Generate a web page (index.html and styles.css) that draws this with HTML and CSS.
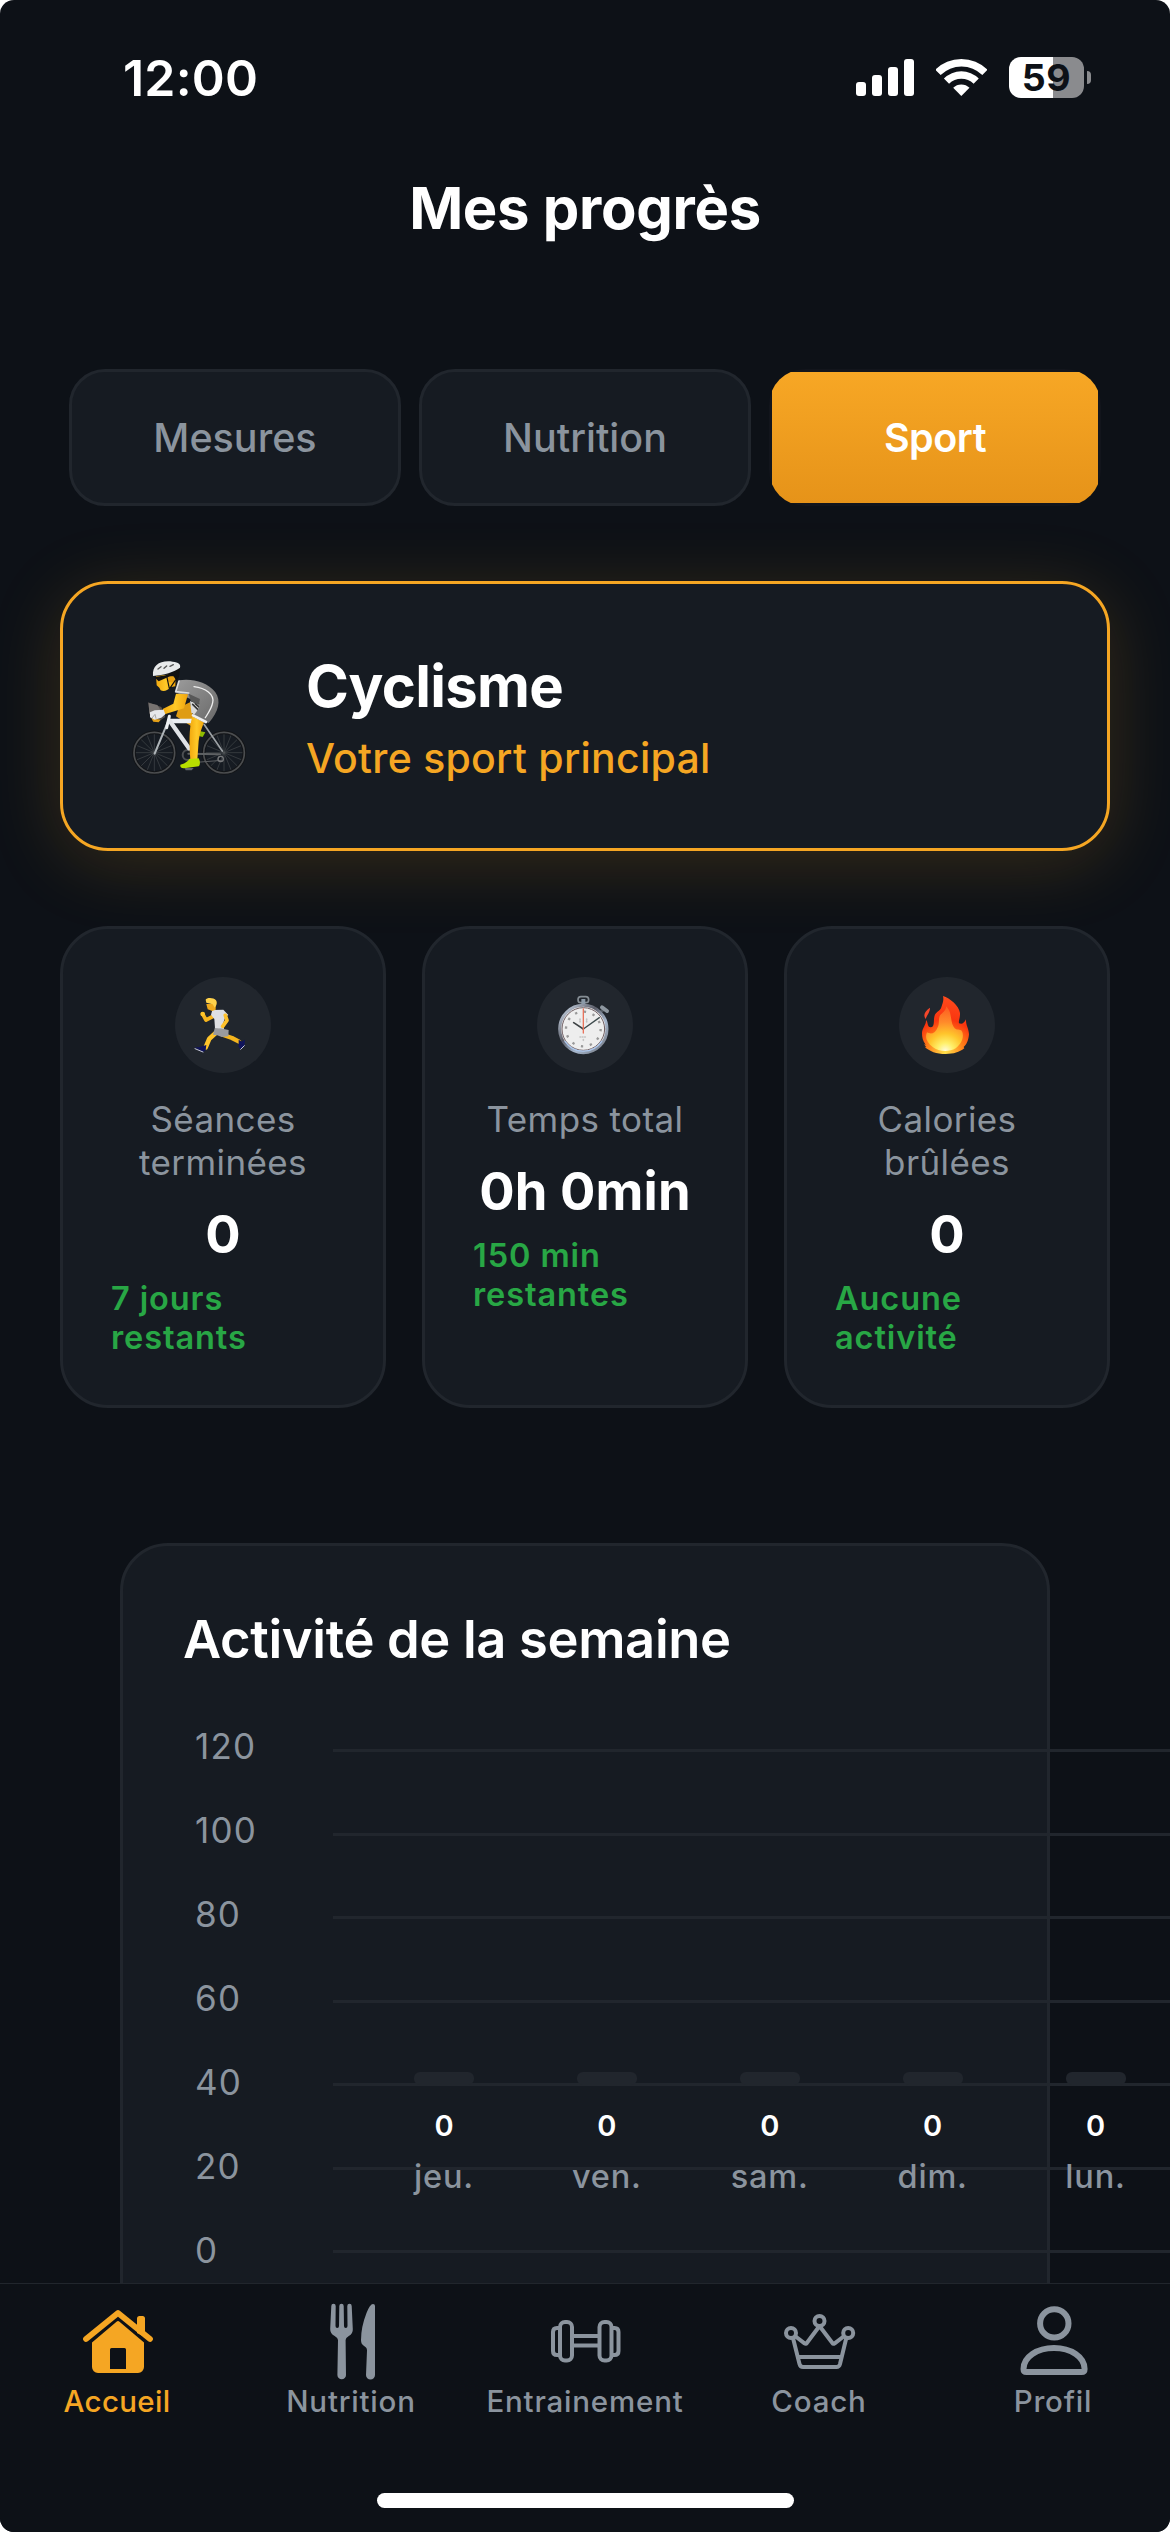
FILE: index.html
```html
<!DOCTYPE html>
<html lang="fr">
<head>
<meta charset="utf-8">
<title>Mes progrès</title>
<link rel="stylesheet" href="styles.css">
</head>
<body>
<div class="screen">
  <main class="content">
    <div class="status-bar">
      <span class="time">12:00</span>
      <div class="status-icons">
        <svg class="signal" viewBox="0 0 58 41" fill="#fff">
          <rect x="0" y="25" width="10" height="14" rx="3"/>
          <rect x="16" y="18" width="10" height="21" rx="3"/>
          <rect x="32" y="10" width="10" height="29" rx="3"/>
          <rect x="48" y="2" width="10" height="37" rx="3"/>
        </svg>
        <svg class="wifi" viewBox="0 0 153 123" fill="#fff">
          <path d="M-2.5 38.5A111 111 0 0 1 154.500 38.500L139 54A89 89 0 0 0 14 54Z"/>
          <path d="M23.700 64.700A74 74 0 0 1 128.300 64.700L112.800 80.200A52 52 0 0 0 39.200 80.200Z"/>
          <path d="M51.500 92.500A34.600 34.600 0 0 1 100.500 92.500L76 117Z"/>
        </svg>
        <div class="battery">
          <span class="battery-level">59</span>
          <span class="battery-nub"></span>
        </div>
      </div>
    </div>

    <h1 class="page-title">Mes progrès</h1>

    <nav class="segments">
      <button class="segment">Mesures</button>
      <button class="segment">Nutrition</button>
      <button class="segment segment-active"><span class="segment-fill">Sport</span></button>
    </nav>

    <section class="sport-card">
      <svg class="cyclist" viewBox="0 0 420 450" fill="none" stroke-linecap="round" stroke-linejoin="round">
        <defs>
          <linearGradient id="skin" x1="0" y1="0" x2="1" y2="0"><stop offset="0" stop-color="#f2a90f"/><stop offset=".5" stop-color="#ffc928"/><stop offset="1" stop-color="#f0a40c"/></linearGradient>
          <linearGradient id="suit" x1="0" y1="0" x2="1" y2="1"><stop offset="0" stop-color="#9b9b9b"/><stop offset="1" stop-color="#686868"/></linearGradient>
        </defs>
        <g stroke="#55585b" stroke-width="1.500">
          <path d="M45 335H161M103 277V393M62 294L144 376M144 294L62 376M49 357L157 313M81 281L125 389M125 281L81 389M49 313L157 357"/>
          <path d="M254 335H370M312 277V393M271 294L353 376M353 294L271 376M258 357L366 313M290 281L334 389M334 281L290 389M258 313L366 357"/>
        </g>
        <g stroke="#121417" stroke-width="11"><circle cx="103" cy="335" r="61"/><circle cx="312" cy="335" r="61"/></g>
        <g stroke="#4b4d4f" stroke-width="5"><circle cx="103" cy="335" r="61"/><circle cx="312" cy="335" r="61"/></g>
        <path d="M238 270L256 274L248 288L236 285Z" fill="#8ebc00"/>
        <path d="M176 200L210 184L222 240L214 256L168 226Z" fill="#df9c13"/>
        <path d="M210 180L250 195L226 225L214 214Z" fill="#d9d9d9"/>
        <path d="M218 190L240 212M226 188L246 206" stroke="#333" stroke-width="5"/>
        <path d="M306 358L204 366" stroke="#5b5d60" stroke-width="3"/>
        <circle cx="203" cy="342" r="15" stroke="#4c4f52" stroke-width="6"/>
        <path d="M205 338L300 340" stroke="#5e6163" stroke-width="6"/>
        <circle cx="302" cy="354" r="8" stroke="#77797b" stroke-width="4"/>
        <path d="M104 338L148 232" stroke="#aeb4b8" stroke-width="6"/>
        <path d="M252 250L307 330" stroke="#9ea3a7" stroke-width="5"/>
        <path d="M152 240H226" stroke="#e9edf2" stroke-width="14"/>
        <path d="M151 242L207 322" stroke="#dfe2e6" stroke-width="13"/>
        <path d="M148 226L140 260" stroke="#eef0f2" stroke-width="9"/>
        <path d="M84 184L124 198L136 228L118 240L90 224Z" fill="#55504e"/>
        <path d="M86 186L112 192L122 208L88 218Z" fill="#777371"/>
        <path d="M94 232L122 236L116 244L100 242Z" fill="#e4a019"/>
        <path d="M177 118C215 112 262 122 286 154C304 180 296 212 266 246L220 224C234 210 240 196 237 184L206 172L166 154Z" fill="url(#suit)"/>
        <path d="M206 158L240 174L236 192L212 180Z" fill="#585858"/>
        <path d="M222 137C256 141 284 160 278 185C275 202 265 216 256 230" stroke="#eee" stroke-width="4"/>
        <path d="M177 120L167 152L206 156" stroke="#dedede" stroke-width="5"/>
        <path d="M168 158L204 160L192 202L134 220L128 204L160 188Z" fill="url(#skin)"/>
        <path d="M90 214L104 208L131 206L136 220L124 230L104 236L90 229Z" fill="#e7e8eb"/>
        <path d="M97 230L105 220L108 232" stroke="#aaa" stroke-width="3"/>
        <path d="M217 226L252 244C246 260 238 280 236 300L232 357L211 355C208 310 206 266 217 226Z" fill="url(#skin)"/>
        <path d="M219 223L258 243" stroke="#eee" stroke-width="8"/>
        <path d="M208 354L236 352C242 362 240 372 236 376L198 381C184 383 180 379 181 371C190 369 202 364 208 354Z" fill="#b8e000"/>
        <path d="M194 381H221L215 388H197Z" fill="#66696c"/>
        <path d="M108 106L167 98L166 136L150 139C143 150 130 152 122 148L118 140L110 133Z" fill="url(#skin)"/>
        <path d="M102 108L130 104C148 100 160 90 180 80L178 105L170 120L160 106L140 110L116 121Z" fill="#111"/>
        <ellipse cx="153" cy="115" rx="11" ry="9" fill="#e7a014"/>
        <path d="M141 110L148 142M166 118L151 140" stroke="#111" stroke-width="3.500"/>
        <path d="M99 105C96 72 121 57 158 62C176 64 183 70 180 80C163 93 131 102 99 105Z" fill="#e8eaeb"/>
        <path d="M114 84L123 77M132 82L140 75M150 76L160 71" stroke="#555" stroke-width="4"/>
      </svg>
      <div class="sport-text">
        <h2 class="sport-name">Cyclisme</h2>
        <p class="sport-caption">Votre sport principal</p>
      </div>
    </section>

    <section class="stats">
      <article class="stat">
        <div class="stat-icon">
          <svg viewBox="0 0 288 288" fill="none" stroke-linecap="round" stroke-linejoin="round">
            <path d="M145 174L171 183L192 194" stroke="#f5b51d" stroke-width="13"/>
            <path d="M122 168L103 185L92 211" stroke="#ffc42a" stroke-width="14"/>
            <path d="M59 211L72 211L94 204L92 219L84 225Z" fill="#10145c"/>
            <path d="M60 215L84 225" stroke="#c7c9dc" stroke-width="3"/>
            <path d="M191 188L201 194L210 188L208 207L197 217L191 210Z" fill="#10145c"/>
            <path d="M208 206L197 217" stroke="#c7c9dc" stroke-width="3"/>
            <path d="M120 151L161 159L160 178L140 180L127 175L114 173Z" fill="#9a9b9e"/>
            <path d="M83 111L93 129L116 117" stroke="#f7b51e" stroke-width="11"/>
            <circle cx="83" cy="111" r="7" fill="#ffc42a"/>
            <path d="M112 99L145 98L160 114L151 120L145 137L147 156L120 153L118 126L108 113Z" fill="#dedfe2"/>
            <path d="M151 115L156 130L143 148" stroke="#ffc12a" stroke-width="11"/>
            <path d="M94 81H122V98L112 102L98 97Z" fill="#efa91c"/>
            <path d="M92 68C94 62 116 61 123 70C128 78 124 87 119 92L113 82L94 77Z" fill="#ffd24b"/>
          </svg>
        </div>
        <p class="stat-label">Séances<br>terminées</p>
        <p class="stat-value">0</p>
        <p class="stat-note">7 jours<br>restants</p>
      </article>
      <article class="stat">
        <div class="stat-icon">
          <svg viewBox="0 0 288 288" fill="none" stroke-linecap="round">
            <defs>
              <linearGradient id="rim" x1="0" y1="0" x2="1" y2="1"><stop offset="0" stop-color="#d7e5f6"/><stop offset=".4" stop-color="#5b5d68"/><stop offset=".65" stop-color="#a7b7cd"/><stop offset="1" stop-color="#6d7078"/></linearGradient>
            </defs>
            <rect x="123" y="59" width="32" height="18" rx="9" stroke="#858d94" stroke-width="5"/>
            <path d="M133 66H145V84H133Z" fill="#8b9aa8"/>
            <path d="M188 107L201 97" stroke="#4f565e" stroke-width="9"/>
            <path d="M195 91L210 102" stroke="#8d969f" stroke-width="12"/>
            <circle cx="139" cy="156" r="71" fill="#eee" stroke="url(#rim)" stroke-width="9"/>
            <circle cx="139" cy="156" r="64" stroke="#705f63" stroke-width="3"/>
            <path d="M84 193A66 66 0 0 0 194 193" stroke="#a9c5eb" stroke-width="4"/>
            <circle cx="139" cy="156" r="52" stroke="#999" stroke-width="7" stroke-linecap="butt" stroke-dasharray="7 20.230"/>
            <path d="M129 126V136M149 126V136M129 180H149M139 188V195" stroke="#c3c3c3" stroke-width="5" stroke-dasharray="2 5"/>
            <path d="M139 156L110 137" stroke="#3e4345" stroke-width="5"/>
            <path d="M139 156L187 122" stroke="#3e4b4d" stroke-width="4"/>
            <path d="M139 96V168" stroke="#e8735c" stroke-width="4"/>
          </svg>
        </div>
        <p class="stat-label">Temps total</p>
        <p class="stat-value">0h 0min</p>
        <p class="stat-note">150 min<br>restantes</p>
      </article>
      <article class="stat">
        <div class="stat-icon">
          <svg viewBox="0 0 288 288">
            <defs>
              <radialGradient id="flame" gradientUnits="userSpaceOnUse" cx="139" cy="222" r="150"><stop offset="0" stop-color="#fffbe0"/><stop offset=".16" stop-color="#fff06a"/><stop offset=".35" stop-color="#ffc52c"/><stop offset=".58" stop-color="#ff8a2a"/><stop offset="1" stop-color="#fb4a1e"/></radialGradient>
              <radialGradient id="edge" gradientUnits="userSpaceOnUse" cx="139" cy="226" r="165"><stop offset="0" stop-color="#ffe24b"/><stop offset=".35" stop-color="#ff7c17"/><stop offset=".6" stop-color="#f9350f"/><stop offset="1" stop-color="#ff4a1c"/></radialGradient>
            </defs>
            <path d="M93 92C94 105 84 113 80 126C71 114 78 102 93 92Z" fill="#f5462a"/>
            <path d="M132 57C153 64 180 86 183 108C184 122 178 130 180 139C190 143 195 138 201 127C200 145 210 155 210 172C208 192 202 204 194 210L196 214C180 226 165 231 140 231C112 231 91 223 77 209L82 210L75 202L80 203C71 192 69 180 69 168C70 152 82 144 81 129C88 135 84 151 95 151C108 149 103 133 106 119C110 103 123 104 127 91C131 79 135 71 132 57Z" fill="url(#edge)"/>
            <path d="M141 88C160 105 153 130 163 148C172 166 184 151 190 165C196 183 186 202 170 214C151 226 119 225 101 210C86 198 76 182 84 166C93 170 106 174 115 153C124 139 115 123 126 112C134 103 142 99 141 88Z" fill="url(#flame)"/>
          </svg>
        </div>
        <p class="stat-label">Calories<br>brûlées</p>
        <p class="stat-value">0</p>
        <p class="stat-note">Aucune<br>activité</p>
      </article>
    </section>

    <section class="chart-card">
      <h2 class="chart-title">Activité de la semaine</h2>
      <div class="chart">
        <div class="y-axis">
          <span>120</span><span>100</span><span>80</span><span>60</span><span>40</span><span>20</span><span>0</span>
        </div>
        <div class="plot">
          <div class="grid-lines"><i></i><i></i><i></i><i></i><i></i><i></i><i></i></div>
          <div class="bars">
            <div class="day"><i class="bar"></i><b class="day-value">0</b><span class="day-name">jeu.</span></div>
            <div class="day"><i class="bar"></i><b class="day-value">0</b><span class="day-name">ven.</span></div>
            <div class="day"><i class="bar"></i><b class="day-value">0</b><span class="day-name">sam.</span></div>
            <div class="day"><i class="bar"></i><b class="day-value">0</b><span class="day-name">dim.</span></div>
            <div class="day"><i class="bar"></i><b class="day-value">0</b><span class="day-name">lun.</span></div>
          </div>
        </div>
      </div>
    </section>
  </main>

  <footer class="tab-bar">
    <nav class="tabs">
      <a class="tab tab-active">
        <svg viewBox="0 0 80 78" fill="currentColor">
          <path d="M9 37L41 11L73 37" fill="none" stroke="currentColor" stroke-width="5.800" stroke-linecap="round" stroke-linejoin="round"/>
          <path d="M60 31V16.500a2.500 2.500 0 0 1 2.500-2.500h3a2.500 2.500 0 0 1 2.500 2.500V35Z"/>
          <path fill-rule="evenodd" d="M39.500 19.700Q41 18.400 42.500 19.700L67 40.500V65a6 6 0 0 1-6 6H21a6 6 0 0 1-6-6V40.500ZM33 47.500q0-1.500 1.500-1.500h13q1.500 0 1.500 1.500V67H33Z"/>
        </svg>
        <span>Accueil</span>
      </a>
      <a class="tab">
        <svg viewBox="0 0 80 78" fill="currentColor">
          <path d="M20.300 4a2.200 2.200 0 0 1 4.400 0L24.500 24q0 2 1.800 2q1.700 0 1.700-2L28.300 4a2.200 2.200 0 0 1 4.400 0L33 24q0 2 1.700 2q1.800 0 1.800-2L36.300 4a2.200 2.200 0 0 1 4.400 0L41.800 27q.3 4.500-4 7q-3.300 1.800-3.200 4L35 73a4.300 4.300 0 0 1-8.600 0L27 38q0-2.200-3.300-4Q19 31.500 19.200 27Z"/>
          <path d="M64 4q0-2-2-2q-3 0-6.500 9Q50 25 50 38q0 4 2.500 5.500l2.500 2q1 1 1 3L55 73a4.500 4.500 0 0 0 9 0Z"/>
        </svg>
        <span>Nutrition</span>
      </a>
      <a class="tab">
        <svg viewBox="0 0 80 78" fill="none" stroke="currentColor" stroke-width="4">
          <rect x="15" y="20" width="12" height="38.500" rx="5"/>
          <rect x="54.500" y="20" width="12" height="38.500" rx="5"/>
          <path d="M15 26h-3q-4 0-4 4V49q0 4 4 4h3M66.500 26h3q4 0 4 4V49q0 4-4 4h-3M27 34H54.500M27 43.500H54.500"/>
        </svg>
        <span>Entrainement</span>
      </a>
      <a class="tab">
        <svg viewBox="0 0 80 78" fill="none" stroke="currentColor" stroke-width="4" stroke-linejoin="round">
          <circle cx="12" cy="31" r="5"/><circle cx="40.500" cy="19" r="5"/><circle cx="69.200" cy="31" r="5"/>
          <path d="M14 36L20.500 62q.8 3 3.500 3H57.500q2.700 0 3.500-3L67.300 36M20 55H61.500M16 34L25.500 41.300q1.500 1 2.500-.5L40.500 24L53.200 40.800q1 1.500 2.500.5L65.200 34"/>
        </svg>
        <span>Coach</span>
      </a>
      <a class="tab">
        <svg viewBox="0 0 80 78" fill="none" stroke="currentColor" stroke-width="6">
          <circle cx="41.300" cy="21.400" r="14.200"/>
          <path d="M10.500 67C10.500 55 24 46 41 46S71.600 55 71.600 67q0 3-3 3H13.500q-3 0-3-3Z"/>
        </svg>
        <span>Profil</span>
      </a>
    </nav>
    <div class="home-indicator"></div>
  </footer>
</div>
</body>
</html>
```
FILE: styles.css
```css
* {
  box-sizing: border-box;
}

body {
  margin: 0;
  background: #fff;
  font-family: Inter, "Liberation Sans", sans-serif;
  color: #fff;
}

h1, h2, p {
  margin: 0;
}

svg {
  display: block;
}

.screen {
  display: flex;
  flex-direction: column;
  width: 1170px;
  height: 2532px;
  overflow: hidden;
  border-radius: 14px;
  background: #0d1117;
}

.content {
  flex: 1;
  min-height: 0;
  overflow: hidden;
}

/* Status bar */
.status-bar {
  display: flex;
  justify-content: space-between;
  align-items: flex-start;
  height: 141px;
  padding: 48px 79px 0 123px;
}

.time {
  font-size: 50px;
  font-weight: 600;
  line-height: 60px;
  letter-spacing: 0.2px;
}

.status-icons {
  display: flex;
  gap: 22px;
  padding-top: 9px;
}

.signal {
  width: 58px;
  height: 41px;
}

.wifi {
  width: 51px;
  height: 41px;
}

.battery {
  display: flex;
  align-items: center;
  gap: 3px;
}

.battery-level {
  width: 75px;
  height: 41px;
  border-radius: 12px;
  background: linear-gradient(90deg, #fff 44px, #8a8b8e 44px);
  color: #0d1117;
  font-size: 37.5px;
  font-weight: 650;
  line-height: 41px;
  letter-spacing: 0.6px;
  text-align: center;
}

.battery-nub {
  width: 4px;
  height: 13px;
  border-radius: 0 4px 4px 0;
  background: #8a8b8e;
}

.page-title {
  height: 228px;
  padding-top: 31px;
  font-size: 58px;
  font-weight: 700;
  line-height: 72px;
  letter-spacing: -0.3px;
  text-align: center;
}

/* Segmented tabs */
.segments {
  display: grid;
  grid-template-columns: repeat(3, 1fr);
  gap: 18px;
  padding: 0 69px;
}

.segment {
  height: 137px;
  padding: 0;
  border: 3px solid #21262d;
  border-radius: 36px;
  background: #161b22;
  color: #8b949e;
  font: 550 39.5px Inter, "Liberation Sans", sans-serif;
  letter-spacing: 0;
}

.segment-active {
  padding: 3px;
  border: 0;
  overflow: hidden;
  background: #12151c;
  color: #fff;
  font-weight: 600;
  letter-spacing: -0.5px;
}

.segment-fill {
  display: flex;
  align-items: center;
  justify-content: center;
  height: 131px;
  background: linear-gradient(#f7a725, #e69319);
}

/* Main sport */
.sport-card {
  display: flex;
  align-items: center;
  gap: 46px;
  height: 270px;
  margin: 75px 60px 0;
  padding-left: 57px;
  border: 3px solid #f5a623;
  border-radius: 48px;
  background: #161b22;
  box-shadow: 0 12px 72px rgba(245, 166, 35, 0.18);
}

.cyclist {
  width: 140px;
  height: 150px;
}

.sport-name {
  font-size: 58px;
  font-weight: 700;
  line-height: 72px;
  letter-spacing: -0.7px;
}

.sport-caption {
  margin-top: 11px;
  color: #f5a623;
  font-size: 41px;
  font-weight: 500;
  line-height: 50px;
  letter-spacing: 0.25px;
}

/* Statistics */
.stats {
  display: grid;
  grid-template-columns: repeat(3, 1fr);
  gap: 36px;
  margin: 75px 60px 0;
}

.stat {
  height: 482px;
  padding: 48px;
  border: 3px solid #21262d;
  border-radius: 48px;
  background: #161b22;
  text-align: center;
}

.stat-icon {
  width: 96px;
  height: 96px;
  margin: 0 auto;
  border-radius: 50%;
  background: #21262d;
}

.stat-label {
  margin-top: 25px;
  color: #8b949e;
  font-size: 35px;
  line-height: 43px;
  letter-spacing: 0.4px;
  white-space: nowrap;
}

.stat-value {
  margin-top: 18px;
  font-size: 52.5px;
  font-weight: 700;
  line-height: 64px;
  letter-spacing: 0.1px;
  white-space: nowrap;
}

.stat-note {
  margin-top: 13px;
  color: #28a745;
  font-size: 32.5px;
  font-weight: 560;
  line-height: 39px;
  letter-spacing: 0.9px;
  text-align: left;
}

/* Weekly activity */
.chart-card {
  width: 930px;
  height: 900px;
  margin: 135px 0 0 120px;
  padding: 60px;
  border: 3px solid #21262d;
  border-radius: 48px;
  background: #161b22;
}

.chart-title {
  font-size: 52.5px;
  font-weight: 600;
  line-height: 66px;
  letter-spacing: -0.35px;
}

.chart {
  display: grid;
  grid-template-columns: 150px 1000px;
  margin-top: 32px;
}

.y-axis {
  display: flex;
  flex-direction: column;
  padding-left: 12px;
  color: #8b949e;
  font-size: 35px;
  line-height: 84px;
  letter-spacing: 1.2px;
}

.plot {
  display: grid;
}

.grid-lines,
.bars {
  grid-area: 1 / 1;
}

.grid-lines {
  padding-top: 45px;
}

.grid-lines i {
  display: block;
  height: 83.5px;
  border-top: 3px solid #21262d;
}

.bars {
  display: flex;
  padding: 368px 0 0 29.5px;
}

.day {
  display: flex;
  flex-direction: column;
  align-items: center;
  width: 162.9px;
}

.bar {
  width: 60px;
  height: 13px;
  border-radius: 6px;
  background: #21262d;
}

.day-value {
  margin-top: 23px;
  font-size: 29px;
  font-weight: 600;
  line-height: 36px;
}

.day-name {
  margin-top: 12px;
  color: #8b949e;
  font-size: 32.5px;
  font-weight: 470;
  line-height: 42px;
  letter-spacing: 0.8px;
}

/* Bottom navigation */
.tab-bar {
  display: flex;
  flex-direction: column;
  align-items: center;
  justify-content: space-between;
  height: 249px;
  padding: 18px 0 24px;
  border-top: 1px solid #21262d;
  background: #0d1117;
}

.tabs {
  display: grid;
  grid-template-columns: repeat(5, 1fr);
  width: 100%;
}

.tab {
  display: flex;
  flex-direction: column;
  align-items: center;
  gap: 3px;
  color: #8b949e;
  font-size: 29.5px;
  font-weight: 500;
  line-height: 36px;
  letter-spacing: 0.8px;
}

.tab svg {
  width: 80px;
  height: 78px;
}

.tab-active {
  color: #f5a623;
  letter-spacing: 0.3px;
}

.home-indicator {
  width: 417px;
  height: 15px;
  border-radius: 8px;
  background: #fff;
}
```
